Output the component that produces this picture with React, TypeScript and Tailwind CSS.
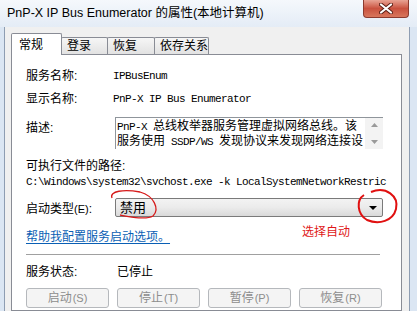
import React from 'react';

const cjk = 'font-["Liberation_Sans","Noto_Sans_CJK_SC",sans-serif]';
const mono = 'font-["Liberation_Mono","Noto_Sans_CJK_SC",monospace] text-[11px] tracking-[-0.6px]';

const Tab: React.FC<{ label: string; active?: boolean; w: string }> = ({ label, active, w }) =>
  active ? (
    <div className={`${w} h-[22px] -mb-px relative z-10 bg-white border border-b-0 border-[#898c95] rounded-t-[2px] pl-[7px] flex items-center`}>
      {label}
    </div>
  ) : (
    <div className={`${w} h-[17px] -ml-px bg-gradient-to-b from-[#f6f6f6] to-[#e2e2e2] border border-b-0 border-[#898c95] rounded-t-[2px] pl-[5px] flex items-center`}>
      {label}
    </div>
  );

const DisabledButton: React.FC<{ label: string; hot: string }> = ({ label, hot }) => (
  <div className="w-[83px] h-[20px] rounded-[3px] border border-[#b5b8bc] bg-[#f4f4f4] flex items-center justify-center text-[#8d8d8d]">
    {label}
    <span className="text-[11px] ml-px">({hot})</span>
  </div>
);

export default function App() {
  return (
    <div className={`relative w-[417px] h-[311px] overflow-hidden bg-[#dbe6f3] flex flex-col text-[12px] text-black ${cjk}`}>
      {/* title bar */}
      <div className="h-[27px] shrink-0 flex items-start bg-gradient-to-b from-[#f5f8fc] to-[#e4ecf6]">
        <div className="pl-[7px] pt-[5px] text-[12.5px] leading-[16px]">PnP-X IP Bus Enumerator 的属性(本地计算机)</div>
        <div className="ml-auto mr-[8px] w-[46px] h-[18px] rounded-b-[4px] border border-t-0 border-[#8c3a2e] bg-gradient-to-b from-[#e8a394] via-[#c9513f] to-[#d8765c] flex items-center justify-center">
          <svg width="14" height="11" viewBox="0 0 14 11">
            <path d="M2 1.5 L12 9.5 M12 1.5 L2 9.5" stroke="#5a1d14" strokeWidth="4" strokeLinecap="round" />
            <path d="M2 1.5 L12 9.5 M12 1.5 L2 9.5" stroke="#ffffff" strokeWidth="2.2" strokeLinecap="round" />
          </svg>
        </div>
      </div>

      {/* client */}
      <div className="flex-1 flex pl-[4px] pr-[7px]">
        <div className="flex-1 flex flex-col bg-[#f0f0f0] border-l border-r border-[#8e9db2] pl-[6px] pr-[7px] pt-[6px]">
          <div className="flex items-end">
            <Tab label="常规" active w="w-[51px]" />
            <Tab label="登录" w="w-[47px]" />
            <Tab label="恢复" w="w-[48px]" />
            <Tab label="依存关系" w="w-[55px]" />
          </div>

          <div className="flex-1 bg-white border border-[#898c95] pl-[14px] flex flex-col">
            <div className="mt-[11px] h-[20px] flex items-center">
              <div className="w-[87px]">服务名称:</div>
              <div className={mono}>IPBusEnum</div>
            </div>
            <div className="mt-[3px] h-[20px] flex items-center">
              <div className="w-[87px]">显示名称:</div>
              <div className={mono}>PnP-X IP Bus Enumerator</div>
            </div>

            <div className="mt-[8px] flex">
              <div className="w-[89px] leading-[20px] pt-px">描述:</div>
              <div className="w-[268px] h-[32px] flex bg-white border-t border-l border-[#8f959b]">
                <div className="flex-1 pl-px pt-px leading-[14px] text-[12px] whitespace-nowrap overflow-hidden">
                  <div>
                    <span className={mono}>PnP-X </span>总线枚举器服务管理虚拟网络总线。该
                  </div>
                  <div>
                    服务使用<span className={mono}> SSDP/WS </span>发现协议来发现网络连接设
                  </div>
                </div>
                <div className="w-[18px] bg-[#f3f3f3] flex flex-col items-center justify-between py-[5px]">
                  <svg width="7" height="4" viewBox="0 0 7 4"><path d="M0 4 L3.5 0 L7 4 Z" fill="#9a9a9a" /></svg>
                  <svg width="7" height="4" viewBox="0 0 7 4"><path d="M0 0 L3.5 4 L7 0 Z" fill="#9a9a9a" /></svg>
                </div>
              </div>
            </div>

            <div className="mt-[9px] h-[16px] flex items-center">可执行文件的路径:</div>
            <div className="h-[16px] flex items-center whitespace-nowrap">
              <span className={mono}>C:\Windows\system32\svchost.exe -k LocalSystemNetworkRestric</span>
            </div>

            <div className="mt-[7px] flex items-center">
              <div className="w-[89px] pt-[3px]">
                启动类型<span className="text-[11px]">(E)</span>:
              </div>
              <div className="w-[268px] h-[19px] rounded-[2px] border border-[#7a7a7a] bg-gradient-to-b from-[#f3f3f3] via-[#ebebeb] to-[#d9d9d9] flex items-center">
                <div className="flex-1 pl-[4px] text-[13px]">禁用</div>
                <div className="w-[18px] h-full flex items-center justify-center">
                  <svg width="8" height="4" viewBox="0 0 8 4"><path d="M0 0 L8 0 L4 4 Z" fill="#000" /></svg>
                </div>
              </div>
            </div>

            <div className="mt-[11px] h-[16px] flex items-center">
              <span className="text-[#0a5fb4] underline underline-offset-2 decoration-[#0a5fb4]">帮助我配置服务启动选项。</span>
            </div>

            <div className="mt-[9px] mr-[21px] border-t border-[#a0a0a0]" />

            <div className="mt-[9px] h-[16px] flex items-center">
              <div className="w-[91px]">服务状态:</div>
              <div>已停止</div>
            </div>

            <div className="mt-[8px] flex gap-[8px]">
              <DisabledButton label="启动" hot="S" />
              <DisabledButton label="停止" hot="T" />
              <DisabledButton label="暂停" hot="P" />
              <DisabledButton label="恢复" hot="R" />
            </div>
          </div>
        </div>
      </div>

      {/* red annotations */}
      <svg className="absolute inset-0 pointer-events-none" width="417" height="311" viewBox="0 0 417 311">
        <path d="M112 198 C 109 191, 124 189, 140 192 C 154 196, 160 209, 153 216 C 146 220, 131 217, 120 215" fill="none" stroke="#d61a1a" strokeWidth="1.3" />
        <path d="M371 192 C 386 186, 399 196, 396 209 C 393 221, 379 225, 367 220 C 357 214, 356 200, 364 195" fill="none" stroke="#e01010" strokeWidth="2" />
      </svg>
      <div className="absolute left-[302px] top-[224px] text-[12px] leading-[16px] text-[#e01818]">选择自动</div>
    </div>
  );
}
